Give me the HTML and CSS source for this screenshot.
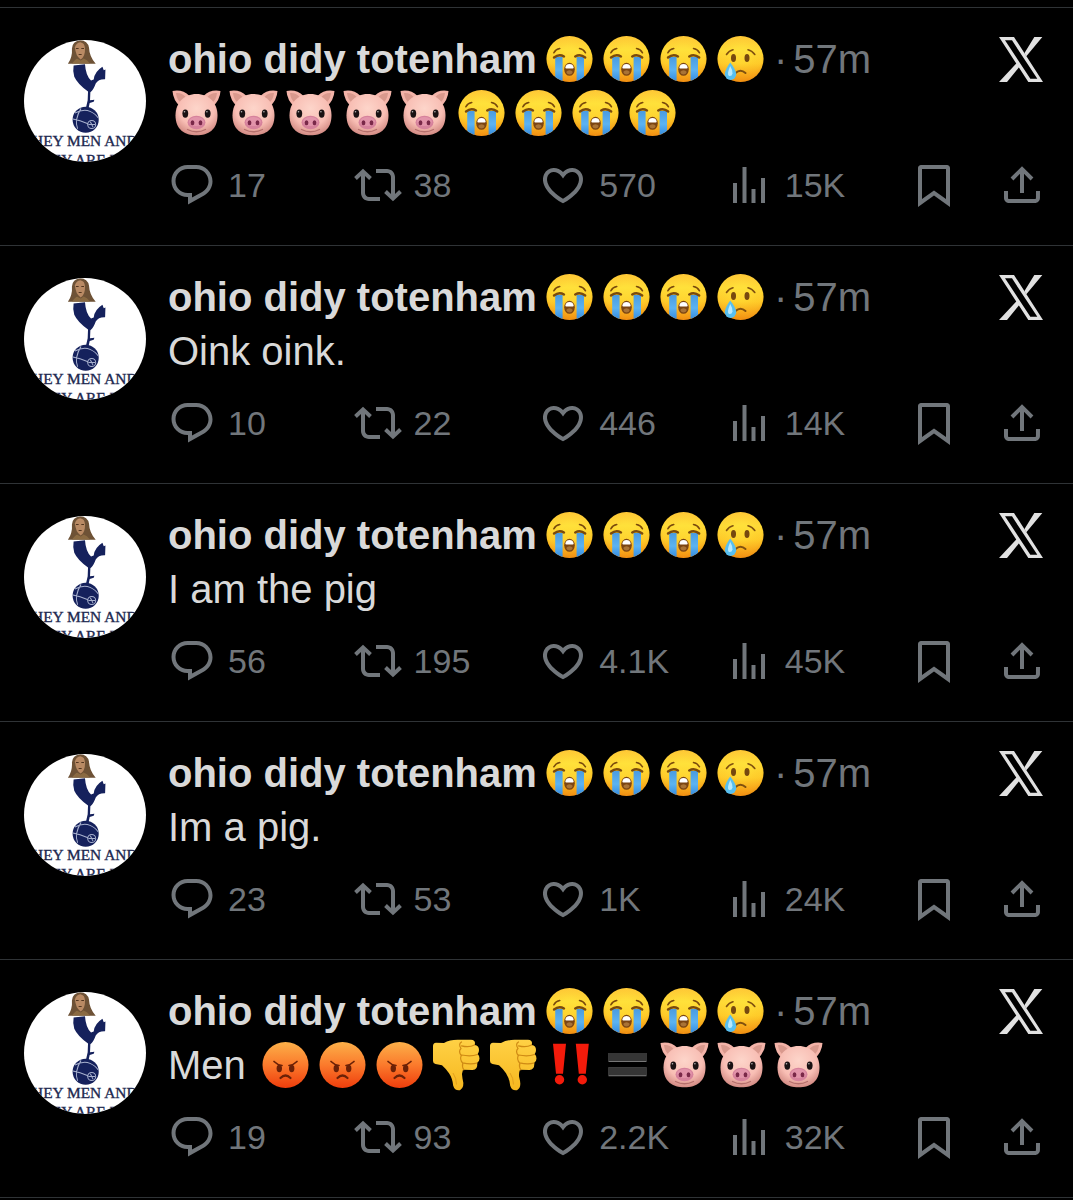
FILE: index.html
```html
<!DOCTYPE html>
<html lang="en">
<head>
<meta charset="utf-8">
<meta name="viewport" content="width=device-width, initial-scale=1">
<title>Posts</title>
<link rel="stylesheet" href="styles.css">
</head>
<body>
<svg class="sprite" aria-hidden="true">
  <defs>
    <linearGradient id="g-yellow" x1="0" y1="0" x2="0" y2="1"><stop offset="0" stop-color="#ffc93a"/><stop offset=".3" stop-color="#ffe03a"/><stop offset=".6" stop-color="#ffce2b"/><stop offset="1" stop-color="#f28a10"/></linearGradient>
    <radialGradient id="g-rim" cx=".5" cy=".42" r=".6"><stop offset=".3" stop-color="#ffe23a" stop-opacity=".3"/><stop offset=".75" stop-color="#fbb71f" stop-opacity=".15"/><stop offset="1" stop-color="#e98a10" stop-opacity=".5"/></radialGradient>
    <linearGradient id="g-tear" x1="0" y1="0" x2="0" y2="1"><stop offset="0" stop-color="#4a9be0"/><stop offset=".5" stop-color="#5cb3f2"/><stop offset="1" stop-color="#2f86dc"/></linearGradient>
    <linearGradient id="g-red" x1="0" y1="0" x2="0" y2="1"><stop offset="0" stop-color="#fcb049"/><stop offset=".5" stop-color="#fb7a2c"/><stop offset="1" stop-color="#ee3d0c"/></linearGradient>
    <radialGradient id="g-pig" cx=".5" cy=".35" r=".65"><stop offset="0" stop-color="#fdd5ca"/><stop offset=".65" stop-color="#f8beb4"/><stop offset="1" stop-color="#d48c85"/></radialGradient>
    <linearGradient id="g-thumb" x1="0" y1="0" x2="0" y2="1"><stop offset="0" stop-color="#ffd145"/><stop offset="1" stop-color="#f6b71f"/></linearGradient>
    <clipPath id="c-face"><circle cx="28.5" cy="27" r="23"/></clipPath>
    <clipPath id="c-avatar"><circle cx="182" cy="182" r="182"/></clipPath>
  </defs>

  <symbol id="sob" viewBox="0 0 57 54">
    <circle cx="28.5" cy="27" r="23" fill="url(#g-yellow)"/><circle cx="28.5" cy="27" r="23" fill="url(#g-rim)"/>
    <g clip-path="url(#c-face)" fill="url(#g-tear)"><path d="M14.2 25h7.4v26h-7.4zM35.6 25H43v26h-7.4z"/></g>
    <g fill="none" stroke="#7a4a0c" stroke-linecap="round"><path d="M13 25.5q5-4 10-1M34.2 24.5q5-3 10 1" stroke-width="2.4"/><path d="M12.8 20.8q2-3.6 6-4.2M38.500 16.600q4 .6 6 4.200" stroke-width="1.500"/></g>
    <ellipse cx="28.500" cy="37.300" rx="5.300" ry="6.500" fill="#7b4513"/><path d="M24.300 35.500a4.300 4.300 0 0 1 8.400 0q0 1-1 1h-6.400q-1 0-1-1z" fill="#fff"/><path d="M25.200 40a4 4 0 0 1 6.600 0q-1 2.600-3.300 2.600T25.200 40z" fill="#a97336"/>
  </symbol>
  <symbol id="cry" viewBox="0 0 57 54">
    <circle cx="28.5" cy="27" r="23" fill="url(#g-yellow)"/><circle cx="28.5" cy="27" r="23" fill="url(#g-rim)"/>
    <ellipse cx="21.500" cy="26" rx="2.500" ry="4" fill="#76480f"/><ellipse cx="35" cy="26" rx="2.500" ry="4" fill="#76480f"/>
    <g fill="none" stroke="#80500f" stroke-linecap="round"><path d="M14.500 22.500q2.500-4 6.500-4.800M36 17.700q4 .8 6.800 4.800" stroke-width="1.600"/><path d="M23.500 41q5-4.500 10 0" stroke-width="2"/></g>
    <path d="M18.200 30.500q6 7.500 6 11.800a5.700 5.700 0 0 1-11.400 0q0-4.300 5.400-11.800z" fill="#58bff0"/><path d="M18.200 34q2.500 4 2.300 7.500-.5 3-3.500 2.500-2.500-1.500 1.200-10z" fill="#b8e9fd"/>
  </symbol>
  <symbol id="angry" viewBox="0 0 57 54">
    <circle cx="28.500" cy="27" r="23" fill="url(#g-red)"/>
    <g fill="#6a2107"><ellipse cx="22.300" cy="30.500" rx="2.700" ry="3.700"/><ellipse cx="34.700" cy="30.500" rx="2.700" ry="3.700"/></g>
    <g fill="none" stroke="#6a2107" stroke-width="1.700" stroke-linecap="round"><path d="M17 23.500q3.500 3.500 8 4M40 23.500q-3.500 3.500-8 4"/><path d="M23.500 40q5-5 10 0" stroke-width="2.200"/></g>
  </symbol>
  <symbol id="pig" viewBox="0 0 57 54">
    <path d="M4.500 5q10-2 17 5l-9 11Q5 14 4.500 5zM52.500 5q-10-2-17 5l9 11q7.500-7 8-16z" fill="#f3b3a8"/>
    <path d="M8 7q6-.5 9.500 4L13 17Q8.500 13 8 7zM49 7q-6-.5-9.500 4l4.500 6q4.500-4 5-10z" fill="#d9998d"/>
    <path d="M28.500 8C41 8 49.500 17 49.500 29.500c0 14-9 19.800-21 19.800s-21-5.800-21-19.800C7.500 17 16 8 28.500 8z" fill="url(#g-pig)"/>
    <g fill="#191213"><ellipse cx="17.300" cy="27.600" rx="2.900" ry="4.200"/><ellipse cx="39.700" cy="27.600" rx="2.900" ry="4.200"/></g>
    <g fill="#fff" opacity=".7"><circle cx="16.500" cy="25.800" r=".8"/><circle cx="38.900" cy="25.800" r=".8"/></g>
    <ellipse cx="28.500" cy="36.500" rx="9" ry="6.800" fill="#d6829c"/><ellipse cx="28.500" cy="35.500" rx="7.500" ry="4.500" fill="#e294aa"/>
    <g fill="#792848"><ellipse cx="24.500" cy="36.700" rx="1.900" ry="2.500"/><ellipse cx="32.500" cy="36.700" rx="1.900" ry="2.500"/></g>
    <path d="M19.500 43.500q9 4.500 18 0" fill="none" stroke="#b5706c" stroke-width="1.300" stroke-linecap="round"/>
  </symbol>
  <symbol id="down" viewBox="0 0 57 54">
    <path d="M5 8q0-3 3-3.300l8 .3q6-3.500 15-3.200h12q4 .2 4 3.200l-.3 2q4.300.7 4.300 5 0 2.800-1.300 4 1.800 1.500 1.800 4.500 0 3-2.300 4.200.8 7-4.700 7.300l-9.500-.2q-1.800 4-.5 8.700 2.500 9-2.500 11.700-5 1-6.800-4.500-.7-7.500-4.200-12.500-3.500-5-7-8L7.500 26Q5 25.500 5 23z" fill="url(#g-thumb)"/>
    <path d="M46.500 7q-5.500 2.800-13 .8M49.500 16.500q-6.500 2.300-16 .5M49 25q-6 1.800-14.500-.2M33.500 4q-3.500 2-.5 6.500-3 3 .3 7-2 4 1.500 7.500-1 4 1 6.800" fill="none" stroke="#cf8a14" stroke-width="1.200" stroke-linecap="round"/>
    <path d="M25 35q3.500 5 3.500 11.500" fill="none" stroke="#e3a01c" stroke-width="1"/>
  </symbol>
  <symbol id="bangs" viewBox="0 0 57 54">
    <g fill="#f41b0b"><path d="M11 5.700h13l-3 30h-7zM33.800 5.700h13l-3 30h-7z"/><circle cx="17.500" cy="41.800" r="4.700"/><circle cx="40.300" cy="41.800" r="4.700"/></g>
  </symbol>
  <symbol id="equals" viewBox="0 0 57 54">
    <path d="M9.500 15h38v9h-38zM9.500 29.300h38v9h-38z" fill="#777"/><path d="M9.500 15h38v8h-38zM9.500 29.300h38v8h-38z" fill="#353535"/>
  </symbol>

  <symbol id="reply" viewBox="0 0 24 24"><path d="M1.751 10c0-4.42 3.584-8 8.005-8h4.366c4.49 0 8.129 3.64 8.129 8.13 0 2.96-1.607 5.68-4.196 7.11l-8.054 4.46v-3.69h-.067c-4.49.1-8.183-3.51-8.183-8.010zm8.005-6c-3.317 0-6.005 2.690-6.005 6 0 3.370 2.770 6.080 6.138 6.010l.351-.010h1.761v2.300l5.087-2.810c1.951-1.080 3.163-3.130 3.163-5.360 0-3.390-2.744-6.130-6.129-6.130H9.756z"/></symbol>
  <symbol id="repost" viewBox="0 0 24 24"><path d="M4.500 3.880l4.432 4.140-1.364 1.460L5.500 7.550V16c0 1.100.896 2 2 2H13v2H7.500c-2.209 0-4-1.790-4-4V7.550L1.432 9.480.068 8.020 4.500 3.880zM16.500 6H11V4h5.500c2.209 0 4 1.790 4 4v8.450l2.068-1.930 1.364 1.460-4.432 4.140-4.432-4.140 1.364-1.460 2.068 1.930V8c0-1.100-.896-2-2-2z"/></symbol>
  <symbol id="like" viewBox="0 0 24 24"><path d="M16.697 5.500c-1.222-.060-2.679.510-3.890 2.160l-.805 1.090-.806-1.090C9.984 6.010 8.526 5.440 7.304 5.500c-1.243.070-2.349.780-2.910 1.910-.552 1.120-.633 2.780.479 4.820 1.074 1.970 3.257 4.270 7.129 6.610 3.870-2.340 6.052-4.640 7.126-6.610 1.111-2.040 1.030-3.700.477-4.820-.561-1.130-1.666-1.840-2.908-1.910zm4.187 7.690c-1.351 2.480-4.001 5.120-8.379 7.670l-.503.300-.504-.300c-4.379-2.550-7.029-5.190-8.382-7.670-1.360-2.500-1.410-4.860-.514-6.670.887-1.790 2.647-2.910 4.601-3.010 1.651-.090 3.368.560 4.798 2.010 1.429-1.450 3.146-2.100 4.796-2.010 1.954.100 3.714 1.220 4.601 3.010.896 1.810.846 4.170-.514 6.670z"/></symbol>
  <symbol id="views" viewBox="0 0 24 24"><path d="M8.750 21V3h2v18h-2zM18 21V8.500h2V21h-2zM4 21l.004-10h2L6 21H4zm9.248 0v-7h2v7h-2z"/></symbol>
  <symbol id="save" viewBox="0 0 24 24"><path d="M4 3.500C4 2.670 4.670 2 5.500 2h13c.83 0 1.500.670 1.500 1.500v19.440l-8-5.710-8 5.710V3.500zM6 4v15.060l6-4.290 6 4.290V4H6z"/></symbol>
  <symbol id="share" viewBox="0 0 24 24"><path d="M12 2.590l5.700 5.700-1.410 1.420L13 6.410V16h-2V6.410l-3.300 3.300-1.410-1.420L12 2.590zM21 15l-.020 3.510c0 1.380-1.120 2.490-2.500 2.490H5.500C4.110 21 3 19.880 3 18.500V15h2v3.500c0 .280.220.500.500.500h12.980c.280 0 .500-.220.500-.500L19 15h2z"/></symbol>
  <symbol id="x" viewBox="0 0 132 135"><path fill-rule="evenodd" d="M0 0H45L132 135H88ZM18 10L94 125H115L39 10Z"/><path d="M106 0H130L82 58 76 49ZM0 135H24L63 87 56 75Z"/></symbol>

  <symbol id="avatar" viewBox="0 0 364 364">
    <g clip-path="url(#c-avatar)">
      <path d="M0 0h364v364H0z" fill="#fff"/>
      <path d="M131 71Q145 50 143 25q2-21 24-24 23 1 27 22 1 26 20 48z" fill="#6e5236"/>
      <path d="M152 22q4-14 16-15 13 2 14 18 1 24-13 33-15-9-17-36z" fill="#b98a64"/><path d="M143 70q12-15 16-14l10 5 9-6q10 3 19 15z" fill="#8a6a42"/>
      <path d="M155 25h8m8 0h8M163 43h9" stroke="#51351f" stroke-width="3"/>
      <g fill="#15215c"><path d="M148 76l34-4q2 33 18 49l8-3q2-23 26-38l4 10 5-2-1 29q-20-1-28 13-6 18-16 26l-1 24 13-2-2 6-12 4-4 18h-8l6-26 1-26q-31-22-41-44-5-18-2-34z"/><circle cx="184" cy="238" r="39"/></g>
      <g fill="none" stroke="#a9b2cf" stroke-width="3"><path d="M146 236q20 4 45 14M152 218q25-13 45-5 17 8 24 19M160 265q-11-25 10-61"/><circle cx="202" cy="252" r="12"/><path d="M192 252h20M198 244l8 16"/></g>
      <text x="24" y="315" class="crest-text">HEY MEN AND</text>
      <text x="22" y="372" class="crest-text">THEY ARE IN</text>
    </g>
  </symbol>
</svg>

<main class="feed">
  <article class="post">
    <a class="avatar" href="#profile" aria-label="Profile"><svg><use href="#avatar"/></svg></a>
    <div class="content">
      <header class="post-head">
        <a class="name" href="#profile">ohio didy totenham</a>
        <span class="emojis"><svg class="emoji"><use href="#sob"/></svg><svg class="emoji"><use href="#sob"/></svg><svg class="emoji"><use href="#sob"/></svg><svg class="emoji"><use href="#cry"/></svg></span>
        <span class="dot">·</span><time>57m</time>
        <svg class="logo"><use href="#x"/></svg>
      </header>
      <p class="body"><svg class="emoji"><use href="#pig"/></svg><svg class="emoji"><use href="#pig"/></svg><svg class="emoji"><use href="#pig"/></svg><svg class="emoji"><use href="#pig"/></svg><svg class="emoji"><use href="#pig"/></svg><svg class="emoji"><use href="#sob"/></svg><svg class="emoji"><use href="#sob"/></svg><svg class="emoji"><use href="#sob"/></svg><svg class="emoji"><use href="#sob"/></svg></p>
      <div class="actions">
        <button type="button"><svg><use href="#reply"/></svg>17</button>
        <button type="button"><svg><use href="#repost"/></svg>38</button>
        <button type="button"><svg><use href="#like"/></svg>570</button>
        <button type="button"><svg><use href="#views"/></svg>15K</button>
        <button type="button" aria-label="Bookmark"><svg><use href="#save"/></svg></button>
        <button type="button" aria-label="Share"><svg><use href="#share"/></svg></button>
      </div>
    </div>
  </article>

  <article class="post">
    <a class="avatar" href="#profile" aria-label="Profile"><svg><use href="#avatar"/></svg></a>
    <div class="content">
      <header class="post-head">
        <a class="name" href="#profile">ohio didy totenham</a>
        <span class="emojis"><svg class="emoji"><use href="#sob"/></svg><svg class="emoji"><use href="#sob"/></svg><svg class="emoji"><use href="#sob"/></svg><svg class="emoji"><use href="#cry"/></svg></span>
        <span class="dot">·</span><time>57m</time>
        <svg class="logo"><use href="#x"/></svg>
      </header>
      <p class="body">Oink oink.</p>
      <div class="actions">
        <button type="button"><svg><use href="#reply"/></svg>10</button>
        <button type="button"><svg><use href="#repost"/></svg>22</button>
        <button type="button"><svg><use href="#like"/></svg>446</button>
        <button type="button"><svg><use href="#views"/></svg>14K</button>
        <button type="button" aria-label="Bookmark"><svg><use href="#save"/></svg></button>
        <button type="button" aria-label="Share"><svg><use href="#share"/></svg></button>
      </div>
    </div>
  </article>

  <article class="post">
    <a class="avatar" href="#profile" aria-label="Profile"><svg><use href="#avatar"/></svg></a>
    <div class="content">
      <header class="post-head">
        <a class="name" href="#profile">ohio didy totenham</a>
        <span class="emojis"><svg class="emoji"><use href="#sob"/></svg><svg class="emoji"><use href="#sob"/></svg><svg class="emoji"><use href="#sob"/></svg><svg class="emoji"><use href="#cry"/></svg></span>
        <span class="dot">·</span><time>57m</time>
        <svg class="logo"><use href="#x"/></svg>
      </header>
      <p class="body">I am the pig</p>
      <div class="actions">
        <button type="button"><svg><use href="#reply"/></svg>56</button>
        <button type="button"><svg><use href="#repost"/></svg>195</button>
        <button type="button"><svg><use href="#like"/></svg>4.1K</button>
        <button type="button"><svg><use href="#views"/></svg>45K</button>
        <button type="button" aria-label="Bookmark"><svg><use href="#save"/></svg></button>
        <button type="button" aria-label="Share"><svg><use href="#share"/></svg></button>
      </div>
    </div>
  </article>

  <article class="post">
    <a class="avatar" href="#profile" aria-label="Profile"><svg><use href="#avatar"/></svg></a>
    <div class="content">
      <header class="post-head">
        <a class="name" href="#profile">ohio didy totenham</a>
        <span class="emojis"><svg class="emoji"><use href="#sob"/></svg><svg class="emoji"><use href="#sob"/></svg><svg class="emoji"><use href="#sob"/></svg><svg class="emoji"><use href="#cry"/></svg></span>
        <span class="dot">·</span><time>57m</time>
        <svg class="logo"><use href="#x"/></svg>
      </header>
      <p class="body">Im a pig.</p>
      <div class="actions">
        <button type="button"><svg><use href="#reply"/></svg>23</button>
        <button type="button"><svg><use href="#repost"/></svg>53</button>
        <button type="button"><svg><use href="#like"/></svg>1K</button>
        <button type="button"><svg><use href="#views"/></svg>24K</button>
        <button type="button" aria-label="Bookmark"><svg><use href="#save"/></svg></button>
        <button type="button" aria-label="Share"><svg><use href="#share"/></svg></button>
      </div>
    </div>
  </article>

  <article class="post">
    <a class="avatar" href="#profile" aria-label="Profile"><svg><use href="#avatar"/></svg></a>
    <div class="content">
      <header class="post-head">
        <a class="name" href="#profile">ohio didy totenham</a>
        <span class="emojis"><svg class="emoji"><use href="#sob"/></svg><svg class="emoji"><use href="#sob"/></svg><svg class="emoji"><use href="#sob"/></svg><svg class="emoji"><use href="#cry"/></svg></span>
        <span class="dot">·</span><time>57m</time>
        <svg class="logo"><use href="#x"/></svg>
      </header>
      <p class="body">Men <svg class="emoji"><use href="#angry"/></svg><svg class="emoji"><use href="#angry"/></svg><svg class="emoji"><use href="#angry"/></svg><svg class="emoji"><use href="#down"/></svg><svg class="emoji"><use href="#down"/></svg><svg class="emoji"><use href="#bangs"/></svg><svg class="emoji"><use href="#equals"/></svg><svg class="emoji"><use href="#pig"/></svg><svg class="emoji"><use href="#pig"/></svg><svg class="emoji"><use href="#pig"/></svg></p>
      <div class="actions">
        <button type="button"><svg><use href="#reply"/></svg>19</button>
        <button type="button"><svg><use href="#repost"/></svg>93</button>
        <button type="button"><svg><use href="#like"/></svg>2.2K</button>
        <button type="button"><svg><use href="#views"/></svg>32K</button>
        <button type="button" aria-label="Bookmark"><svg><use href="#save"/></svg></button>
        <button type="button" aria-label="Share"><svg><use href="#share"/></svg></button>
      </div>
    </div>
  </article>
</main>
</body>
</html>
```
FILE: styles.css
```css
* { box-sizing: border-box; }

body {
  margin: 0;
  padding-top: 7px;
  background: #000;
  color: #d9d9d9;
  font-family: "Liberation Sans", Arial, sans-serif;
  font-size: 40px;
  line-height: 54px;
}

.sprite { position: absolute; width: 0; height: 0; }

.crest-text {
  font: 46px "Liberation Serif", serif;
  fill: #20284f;
  stroke: #20284f;
  stroke-width: 1px;
}

.feed { border-top: 1px solid #2f3336; }

.post {
  display: grid;
  grid-template-columns: 122px 1fr;
  column-gap: 22px;
  padding: 24px 27px 35px 24px;
  border-bottom: 1px solid #2f3336;
}

.avatar { margin-top: 8px; }
.avatar svg { display: block; width: 122px; height: 122px; }

.content { min-width: 0; }

.post-head {
  display: flex;
  align-items: center;
}

.name {
  margin-right: 4px;
  color: inherit;
  font-weight: bold;
  text-decoration: none;
  white-space: nowrap;
}

.emojis { display: flex; }
.emoji { width: 57px; height: 54px; vertical-align: top; }

.dot, time { color: #71767b; }
.dot { margin: 0 6px 0 5px; }

.logo {
  width: 44px;
  height: 45px;
  margin: 0 3px 0 auto;
  fill: #e1e1e1;
}

.body { margin: 0; }

.actions {
  display: grid;
  grid-template-columns: repeat(4, 186fr) 88fr 48fr;
  margin-top: 20px;
}

.actions button {
  display: flex;
  align-items: center;
  gap: 12px;
  min-width: 0;
  padding: 0;
  border: 0;
  background: none;
  color: #71767b;
  font: inherit;
  font-size: 34px;
  line-height: 50px;
}

.actions svg {
  flex: none;
  width: 48px;
  height: 50px;
  fill: currentColor;
}
```
